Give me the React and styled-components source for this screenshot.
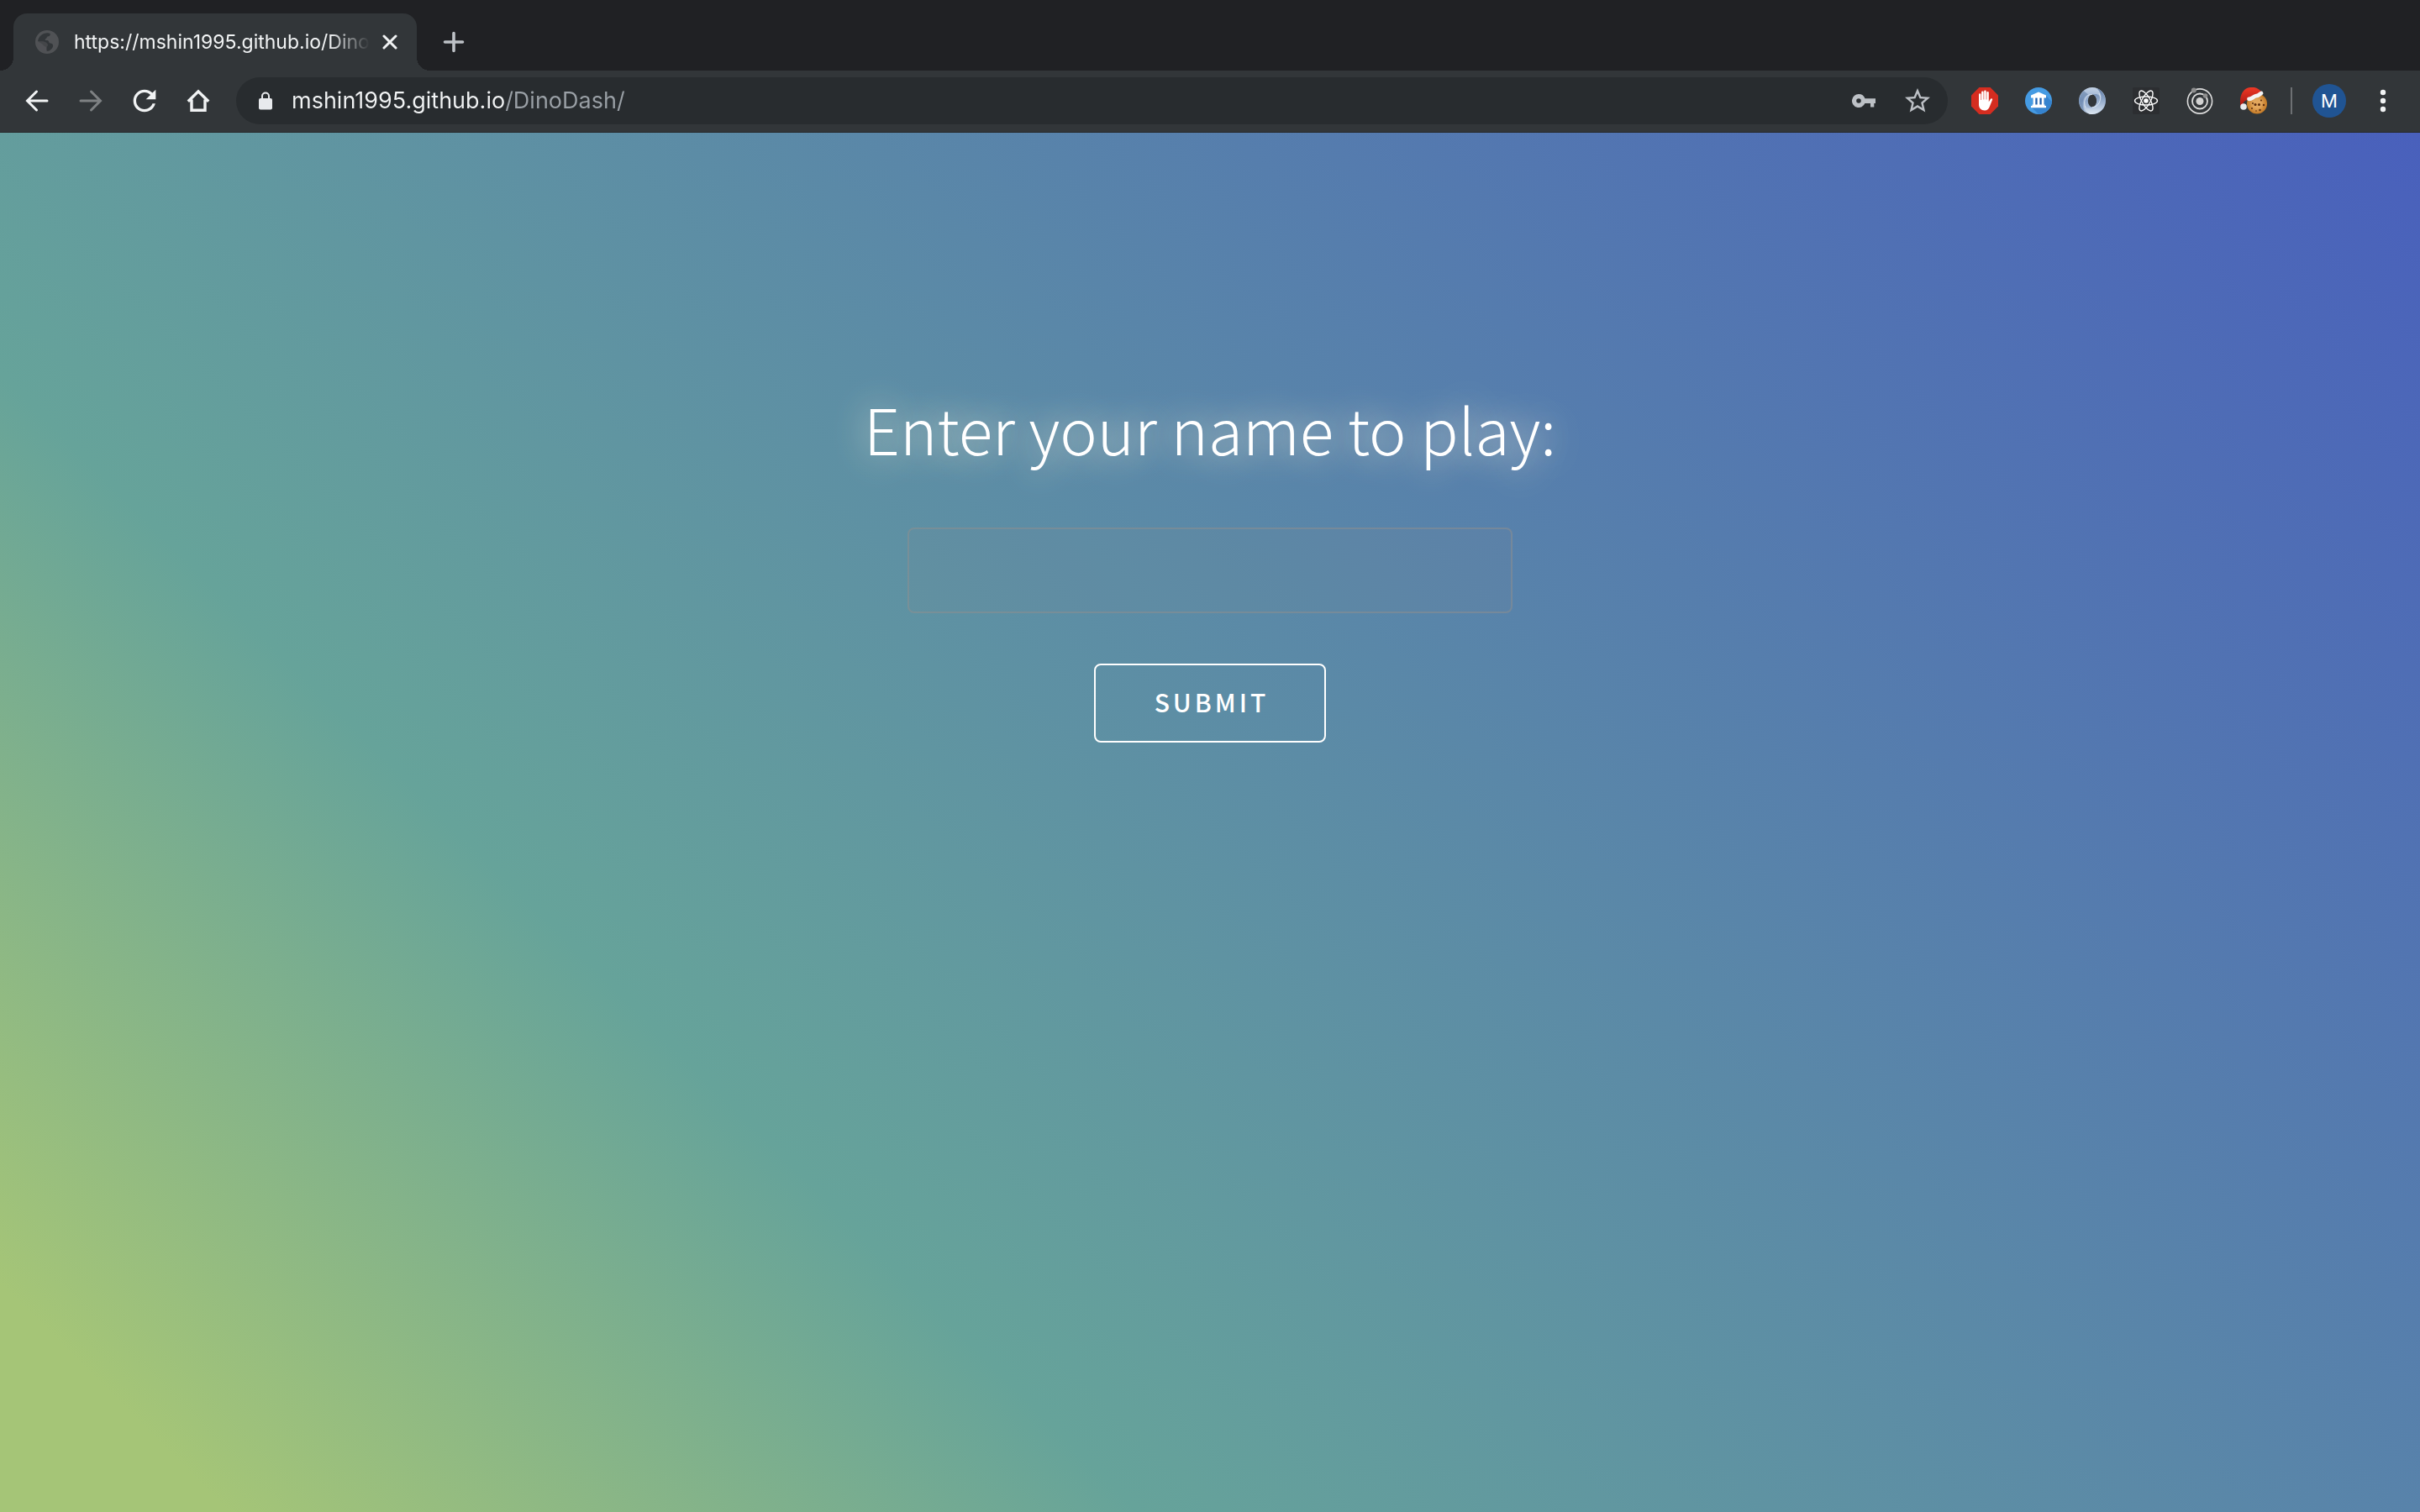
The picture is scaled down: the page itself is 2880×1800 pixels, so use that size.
import React, { useState } from "react";
import styled, { createGlobalStyle } from "styled-components";

const GlobalStyle = createGlobalStyle`
  *, *::before, *::after { box-sizing: border-box; }
  html, body, #root { height: 100%; }
  body { margin: 0; font-family: Inter, "Liberation Sans", sans-serif; }
  button, input { font: inherit; }
`;

const chrome = {
  frame: "#202124",
  bar: "#323639",
  field: "#282c2f",
  text: "#f1f3f4",
  muted: "#9aa0a6",
};

const Window = styled.div`
  min-height: 100%;
  display: flex;
  flex-direction: column;
`;

/* ---------- browser frame ---------- */

const TabStrip = styled.div`
  display: flex;
  align-items: flex-end;
  gap: 24px;
  height: 84px;
  padding-left: 16px;
  background: ${chrome.frame};
`;

const Tab = styled.div`
  position: relative;
  display: flex;
  align-items: center;
  width: 480px;
  height: 68px;
  padding: 0 16px 0 26px;
  border-radius: 16px 16px 0 0;
  background: ${chrome.bar};
  color: ${chrome.text};

  &::before,
  &::after {
    content: "";
    position: absolute;
    bottom: 0;
    width: 16px;
    height: 16px;
  }
  &::before {
    right: 100%;
    background: radial-gradient(circle at 0 0, transparent 16px, ${chrome.bar} 16px);
  }
  &::after {
    left: 100%;
    background: radial-gradient(circle at 100% 0, transparent 16px, ${chrome.bar} 16px);
  }
`;

const TabTitle = styled.span`
  flex: 1;
  min-width: 0;
  margin: 0 8px 0 18px;
  overflow: hidden;
  white-space: nowrap;
  font-size: 23px;
  line-height: 32px;
  mask-image: linear-gradient(to right, #000 calc(100% - 48px), transparent);
`;

const IconButton = styled.button`
  display: grid;
  place-items: center;
  flex: none;
  width: ${(p) => p.$size || 48}px;
  height: ${(p) => p.$size || 48}px;
  padding: 0;
  border: 0;
  border-radius: 50%;
  background: none;
  color: ${(p) => p.$color || chrome.text};
  cursor: pointer;
`;

const NewTab = styled(IconButton)`
  align-self: center;
  margin-top: 16px;
`;

const Toolbar = styled.nav`
  display: flex;
  align-items: center;
  gap: 16px;
  height: 74px;
  padding: 0 20px 2px;
  border-bottom: 1px solid #27292b;
  background: ${chrome.bar};
`;

const AddressBar = styled.div`
  display: flex;
  align-items: center;
  flex: 1;
  height: 56px;
  margin-left: 5px;
  padding: 0 12px 0 26px;
  border-radius: 28px;
  background: ${chrome.field};
`;

const AddressInput = styled.input`
  flex: 1;
  min-width: 0;
  margin-left: 22px;
  padding: 0;
  border: 0;
  outline: 0;
  font-size: 27px;
  line-height: 40px;
  color: transparent;
  caret-color: ${chrome.text};
  background: linear-gradient(to right, ${chrome.text} 254px, ${chrome.muted} 254px);
  background-clip: text;
`;

const AddressActions = styled.div`
  display: flex;
  gap: 16px;
`;

const Extensions = styled.div`
  display: flex;
  gap: 16px;
  margin-left: 4px;
`;

const Divider = styled.span`
  width: 2px;
  height: 32px;
  margin-left: 4px;
  background: #6d7073;
`;

const Avatar = styled.button`
  width: 40px;
  height: 40px;
  margin: 0 4px 0 8px;
  padding: 0;
  border: 0;
  border-radius: 50%;
  background: #205493;
  color: #fff;
  font-size: 22px;
  line-height: 40px;
  text-align: center;
`;

/* ---------- page ---------- */

const Page = styled.main`
  flex: 1;
  padding: 286px 32px 32px;
  font-family: "Noto Sans CJK JP", "Noto Sans", sans-serif;
  color: #fff;
  background: linear-gradient(45deg, #a5c577 6%, #66a39a 30%, #4960bc 100%);
`;

const NameForm = styled.form`
  display: flex;
  flex-direction: column;
  align-items: center;
`;

const Question = styled.label`
  font-size: 75px;
  font-weight: 300;
  line-height: 132px;
  text-align: center;
  text-shadow: 0 0 40px rgba(255, 245, 220, 0.95);
`;

const NameInput = styled.input`
  width: 720px;
  max-width: 100%;
  height: 102px;
  margin-top: 52px;
  padding: 0 32px;
  border: 2px solid rgba(144, 144, 144, 0.5);
  border-radius: 8px;
  outline: 0;
  background: rgba(144, 144, 144, 0.08);
  color: inherit;
  font-size: 32px;
`;

const Submit = styled.button`
  height: 94px;
  margin-top: 60px;
  padding: 0 66px 4px 70px;
  border: 2px solid #fff;
  border-radius: 8px;
  background: transparent;
  color: inherit;
  font-size: 30px;
  font-weight: 500;
  line-height: 48px;
  letter-spacing: 4px;
  text-transform: uppercase;
  cursor: pointer;
`;

/* ---------- drawings ---------- */

const Stroke = ({ size = 28, box = 28, width = 3, cap = "round", children }) => (
  <svg width={size} height={size} viewBox={`0 0 ${box} ${box}`} fill="none" stroke="currentColor"
    strokeWidth={width} strokeLinecap={cap} strokeLinejoin="miter" aria-hidden="true">
    {children}
  </svg>
);

const Globe = () => (
  <svg width="28" height="28" viewBox="0 0 28 28" aria-hidden="true">
    <circle cx="14" cy="14" r="14" fill="#505255" />
    <path fill={chrome.bar} d="M15 3.200L17.800 4C18 6.500 16.500 7.500 14.500 7.500C13.500 8 14 9.500 12.500 10C11.200 10.500 11.500 12 12.800 12C14.500 12 16 12.200 16.300 14.200C16.600 15.800 18.800 15 20.200 16.200C21.500 17.500 21.500 19.500 20 21.500C18 24 16 25 13.500 25C13 23.500 13.500 22.500 13.500 21C13.500 19.500 11 19.500 9.800 18C8.800 16.500 6 14.800 3 13.500C3.500 7.500 8.500 3 15 3.200Z" />
    <path fill="#505255" d="M3 13L9.500 13.200C12 13.800 15 15.500 15 17.500C15 19.200 13 19.800 13 21.500C13 23 14 24 14.500 25.200L8 25L2 19Z" opacity=".6" />
  </svg>
);

const Cross = () => <Stroke size={18} box={18} width={3}><path d="M2 2L16 16M16 2L2 16" /></Stroke>;
const Plus = () => <Stroke size={26} box={26} width={3.6}><path d="M13 2.500V23.500M2.500 13H23.500" /></Stroke>;
const Back = () => <Stroke><path d="M26 14H3M13.500 3L2.500 14L13.500 25" /></Stroke>;
const Forward = () => <Stroke><path d="M2 14H25M14.500 3L25.500 14L14.500 25" /></Stroke>;
const Reload = () => (
  <svg width="40" height="40" viewBox="0 0 24 24" fill="currentColor" aria-hidden="true">
    <path d="M17.650 6.350C16.200 4.900 14.210 4 12 4c-4.420 0-7.990 3.580-7.990 8s3.570 8 7.990 8c3.730 0 6.840-2.550 7.730-6h-2.080c-.82 2.330-3.040 4-5.650 4-3.310 0-6-2.690-6-6s2.690-6 6-6c1.660 0 3.140.69 4.220 1.780L13 11h7V4l-2.350 2.350z" />
  </svg>
);
const Home = () => (
  <Stroke width={3.4} cap="butt"><path d="M1.800 14.800L14 2.800L26.200 14.800M6 12.500V25.300H22V12.500" /></Stroke>
);
const Lock = () => (
  <svg width="18" height="22" viewBox="0 0 18 22" aria-hidden="true">
    <rect x="1" y="8" width="16" height="13.500" rx="2" fill="#e8eaed" />
    <path d="M5 9V5.500a4 4 0 0 1 8 0V9" fill="none" stroke="#e8eaed" strokeWidth="2" />
  </svg>
);
const Key = () => (
  <svg width="28" height="16" viewBox="0 0 28 16" fill="currentColor" aria-hidden="true">
    <path fillRule="evenodd" d="M8 0a8 8 0 1 0 7.400 11H22v4.500h4.300V11H28V5.200H15.500A8 8 0 0 0 8 0zm0 5.200a2.800 2.800 0 1 1 0 5.600a2.800 2.800 0 0 1 0-5.600z" />
  </svg>
);
const Star = () => (
  <svg width="36" height="36" viewBox="0 0 24 24" fill="currentColor" aria-hidden="true">
    <path d="M22 9.240l-7.190-.62L12 2 9.190 8.630 2 9.240l5.460 4.730L5.820 21 12 17.270 18.180 21l-1.630-7.030L22 9.240zM12 15.400l-3.760 2.270 1-4.280-3.320-2.880 4.380-.38L12 6.100l1.710 4.040 4.380.38-3.320 2.880 1 4.280L12 15.400z" />
  </svg>
);
const AdBlock = () => (
  <svg width="32" height="32" viewBox="0 0 32 32" aria-hidden="true">
    <path fill="#d52d20" d="M9.400 0H22.600L32 9.400V22.600L22.600 32H9.400L0 22.600V9.400Z" />
    <path fill="#fff" d="M9 8.500a1.200 1.200 0 0 1 2.500 0V15h.6V5.800a1.250 1.250 0 0 1 2.500 0V14.500h.6V4.800a1.250 1.250 0 0 1 2.500 0V14.500h.6V6.200a1.250 1.250 0 0 1 2.500 0V17.300l2-3.300c.9-1.300 2.700-.5 2.300.8L22 22.500C20.800 26 18.800 27.500 16 27.500C11.500 27.500 9 24.500 9 20.500Z" />
  </svg>
);
const Museum = () => (
  <svg width="32" height="32" viewBox="0 0 32 32" aria-hidden="true">
    <circle cx="16" cy="16" r="16" fill="#459be3" />
    <path fill="#3583cf" d="M25 10L31.800 17A16 16 0 0 1 16 32L8 24Z" />
    <path fill="#1e5fae" d="M9.500 12.500H22.500V21H9.500Z" />
    <path fill="#fff" d="M16 5.500L25 9.500V12.500H7V9.500ZM9.500 12.500H12.300V20.500H9.500ZM14.600 12.500H17.400V20.500H14.600ZM19.700 12.500H22.500V20.500H19.700ZM8.500 20.500H23.500V22H25V24.200H7V22H8.500Z" />
  </svg>
);
const Ring = () => (
  <svg width="32" height="32" viewBox="0 0 32 32" aria-hidden="true">
    <defs>
      <linearGradient id="ringLeft" x1=".4" y1="0" x2=".3" y2="1">
        <stop offset="0" stopColor="#c3d2e5" /><stop offset=".5" stopColor="#8ca5c9" /><stop offset="1" stopColor="#b8c9df" />
      </linearGradient>
      <linearGradient id="ringRight" x1="0" y1="0" x2="0" y2="1">
        <stop offset="0" stopColor="#5f7ba4" /><stop offset=".45" stopColor="#8fa7c8" /><stop offset="1" stopColor="#dce6f1" />
      </linearGradient>
    </defs>
    <path fill="url(#ringLeft)" fillRule="evenodd" d="M16 0a16 16 0 1 0 0 32a16 16 0 1 0 0-32zM16 8.500a5.200 7.500 0 1 1 0 15a5.200 7.500 0 1 1 0-15z" />
    <path fill="url(#ringRight)" d="M20.500 .7A16 16 0 0 1 13 31.700C8 29.500 5.500 25 6 19C7 24.500 12 26 16 23.500A5.200 7.500 0 0 0 17 8.600C21 6.500 25.500 9.500 26.500 14C27.500 9 25 4 20.500 .7Z" />
    <path fill="#5f7ba4" d="M6 4C-1 10-2 23 7 29C3 21 4 12 11 8.500C9 6 6.500 5.500 6 4Z" opacity=".55" />
    <path fill="none" stroke="#e6edf5" strokeWidth=".8" d="M16 8.500C7 8 5 18 8 24M16 23.500C24 23.500 28 14 24 7" />
  </svg>
);
const Atom = () => (
  <svg width="32" height="32" viewBox="0 0 32 32" fill="none" stroke="#fff" strokeWidth="1.400" aria-hidden="true">
    <rect width="32" height="32" rx="2" fill="#2c2e31" stroke="none" />
    <ellipse cx="16" cy="16" rx="13.500" ry="5" />
    <ellipse cx="16" cy="16" rx="13.500" ry="5" transform="rotate(60 16 16)" />
    <ellipse cx="16" cy="16" rx="13.500" ry="5" transform="rotate(120 16 16)" />
    <circle cx="16" cy="16" r="2.800" fill="#fff" stroke="none" />
  </svg>
);
const Orbit = () => (
  <svg width="32" height="32" viewBox="0 0 32 32" aria-hidden="true">
    <circle cx="16" cy="16.500" r="14.600" fill="none" stroke="#dcdcdc" strokeWidth="1.600" />
    <circle cx="16" cy="16.500" r="9" fill="none" stroke="#dcdcdc" strokeWidth="1.800" />
    <circle cx="16" cy="16.500" r="4.500" fill="#d2d2d2" />
    <circle cx="8.800" cy="3.600" r="3" fill="#8e8e8e" />
    <circle cx="22.500" cy="10" r="2.800" fill="#8e8e8e" />
  </svg>
);
const SantaCookie = () => (
  <svg width="32" height="32" viewBox="0 0 32 32" aria-hidden="true">
    <defs>
      <radialGradient id="cookie"><stop offset=".4" stopColor="#e2a65c" /><stop offset="1" stopColor="#c47a25" /></radialGradient>
      <linearGradient id="hat" x1="0" y1="0" x2="0" y2="1"><stop offset="0" stopColor="#ee3826" /><stop offset="1" stopColor="#a91812" /></linearGradient>
    </defs>
    <circle cx="20" cy="19.500" r="12" fill="url(#cookie)" />
    <g fill="#5b2c0e">
      <circle cx="18" cy="20.500" r="1.500" /><circle cx="22.500" cy="20.500" r="1.500" /><circle cx="15" cy="19" r="1" />
      <circle cx="14" cy="25" r="1" /><circle cx="23.500" cy="27" r="1.200" /><circle cx="28" cy="21" r="1.200" />
      <circle cx="25" cy="15.500" r="1" /><circle cx="19" cy="28" r=".8" />
    </g>
    <path fill="url(#hat)" d="M0 22C-1 12 2 1 12 0C18 -1 23 2 26 6L9 15C5 15.500 3 18 3 22Z" />
    <path fill="none" stroke="#f4f4f4" strokeWidth="4.800" strokeLinecap="round" d="M10.500 13.800C14 14 16 10.500 19 10.200C22 10 22.500 8.500 25 7" />
    <circle cx="4" cy="23" r="3.800" fill="#e9eaec" />
  </svg>
);
const Dots = () => (
  <svg width="8" height="28" viewBox="0 0 8 28" fill="currentColor" aria-hidden="true">
    <circle cx="4" cy="4" r="3.200" /><circle cx="4" cy="14" r="3.200" /><circle cx="4" cy="24" r="3.200" />
  </svg>
);

const extensions = [
  ["Ad blocker", AdBlock],
  ["Archive", Museum],
  ["JSON viewer", Ring],
  ["React tools", Atom],
  ["Redux tools", Orbit],
  ["Cookies", SantaCookie],
];

export default function App() {
  const [address, setAddress] = useState("mshin1995.github.io/DinoDash/");
  const [name, setName] = useState("");

  return (
    <Window>
      <GlobalStyle />
      <header>
        <TabStrip>
          <Tab>
            <Globe />
            <TabTitle>https://mshin1995.github.io/DinoDash/</TabTitle>
            <IconButton $size={32} aria-label="Close tab"><Cross /></IconButton>
          </Tab>
          <NewTab $size={40} $color="#bdc1c6" aria-label="New tab"><Plus /></NewTab>
        </TabStrip>
        <Toolbar>
          <IconButton aria-label="Back"><Back /></IconButton>
          <IconButton $color="#7e8183" aria-label="Forward"><Forward /></IconButton>
          <IconButton aria-label="Reload"><Reload /></IconButton>
          <IconButton aria-label="Home"><Home /></IconButton>
          <AddressBar>
            <Lock />
            <AddressInput aria-label="Address" spellCheck={false} value={address}
              onChange={(e) => setAddress(e.target.value)} />
            <AddressActions>
              <IconButton $color="#bdc1c6" aria-label="Saved passwords"><Key /></IconButton>
              <IconButton $color="#bdc1c6" aria-label="Bookmark this page"><Star /></IconButton>
            </AddressActions>
          </AddressBar>
          <Extensions>
            {extensions.map(([label, Icon]) => (
              <IconButton key={label} aria-label={label}><Icon /></IconButton>
            ))}
          </Extensions>
          <Divider />
          <Avatar aria-label="Profile M">M</Avatar>
          <IconButton aria-label="Menu"><Dots /></IconButton>
        </Toolbar>
      </header>
      <Page>
        <NameForm onSubmit={(e) => e.preventDefault()}>
          <Question htmlFor="player">Enter your name to play:</Question>
          <NameInput id="player" type="text" autoComplete="off" value={name}
            onChange={(e) => setName(e.target.value)} />
          <Submit type="submit">Submit</Submit>
        </NameForm>
      </Page>
    </Window>
  );
}
